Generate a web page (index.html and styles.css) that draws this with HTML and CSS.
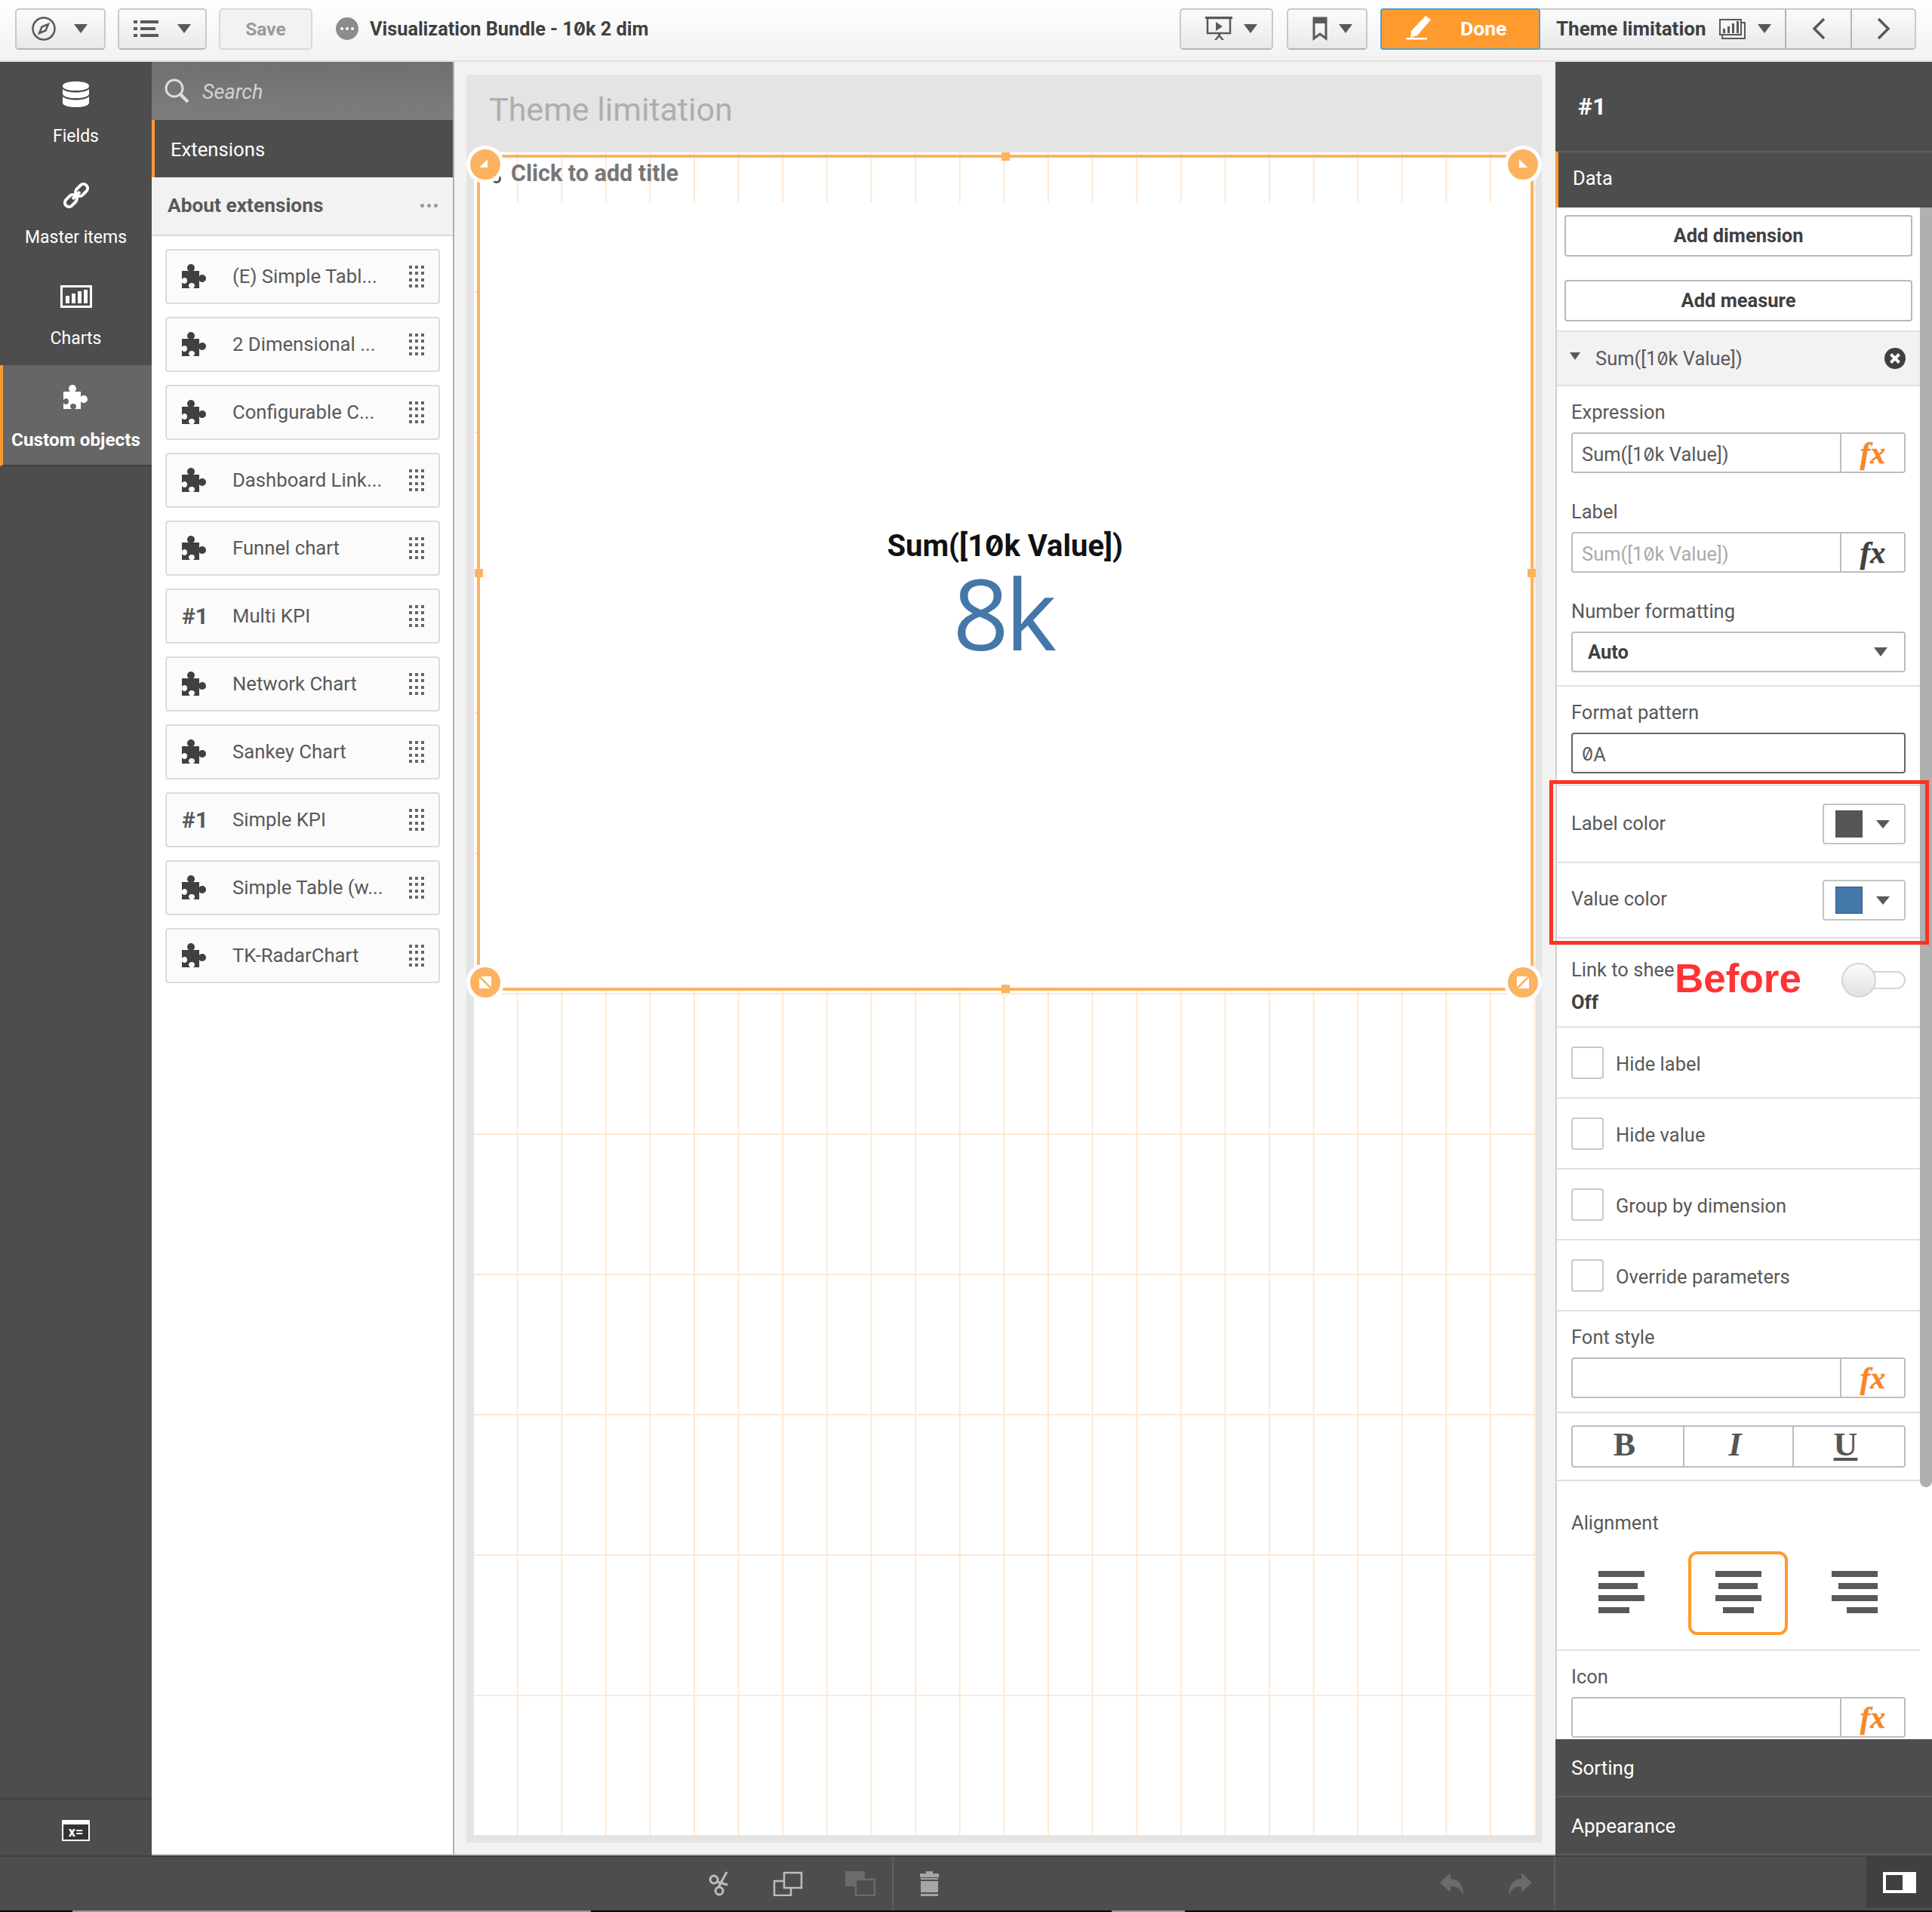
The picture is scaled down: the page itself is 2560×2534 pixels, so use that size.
FILE: index.html
```html
<!DOCTYPE html>
<html lang="en">
<head>
  <meta charset="UTF-8">
  <title>Theme limitation</title>
  <link rel="stylesheet" href="styles.css">
</head>
<body>
  <svg class="sprite" width="0" height="0">
    <symbol id="puzzle" viewBox="0 0 34 34"><path d="M0 9h9c-2-2-2-3-2-4a5 5 0 0 1 10 0c0 1 0 2-2 4h8v7c2-2 3-2 4-2a5 5 0 0 1 0 10c-1 0-2 0-4-2v10h-8c1-1 2-2 2-3a4 4 0 0 0-8 0c0 1 1 2 2 3H0V24c1 1 2 2 3 2a4 4 0 0 0 0-8c-1 0-2 1-3 2z"/></symbol>
    <symbol id="grip" viewBox="0 0 20 29"><path d="M0 0h4v4H0zM8 0h4v4H8zM16 0h4v4h-4zM0 8h4v4H0zM8 8h4v4H8zM16 8h4v4h-4zM0 17h4v4H0zM8 17h4v4H8zM16 17h4v4h-4zM0 25h4v4H0zM8 25h4v4H8zM16 25h4v4h-4z"/></symbol>
  </svg>

  <header class="toolbar">
    <button class="btn btn-nav">
      <svg class="ico" width="32" height="32" viewBox="0 0 32 32"><circle cx="16" cy="16" r="14.5" fill="none" stroke="#595959" stroke-width="2.5"/><path d="M22 10l-3.5 8.5L10 22l3.5-8.500z" fill="none" stroke="#595959" stroke-width="2.500"/></svg>
      <i class="caret"></i>
    </button>
    <button class="btn btn-list">
      <svg class="ico" width="33" height="22" viewBox="0 0 33 22"><path fill="#595959" d="M0 0h5v4H0zM9 0h24v4H9zM0 9h5v4H0zM9 9h20v4H9zM0 18h5v4H0zM9 18h24v4H9z"/></svg>
      <i class="caret"></i>
    </button>
    <button class="btn btn-save">Save</button>
    <span class="app-bubble"><i></i><i></i><i></i></span>
    <span class="app-title">Visualization Bundle - 1<span class="z">0</span>k 2 dim</span>

    <div class="toolbar-right">
      <button class="btn btn-present">
        <svg class="ico" width="36" height="32" viewBox="0 0 36 32"><path fill="none" stroke="#595959" stroke-width="2.500" d="M3 2h30v20H3z"/><path fill="#595959" d="M0 0h36v3H0zM14 7l9 6-9 6zM17 22h3v3l5 6h-3l-3.500-4-3.500 4h-3l5-6z"/></svg>
        <i class="caret"></i>
      </button>
      <button class="btn btn-bookmark">
        <svg class="ico" width="20" height="32" viewBox="0 0 20 32"><path fill="none" stroke="#595959" stroke-width="3" d="M2 2h16v27l-8-6-8 6z"/><path fill="#595959" d="M2 2h16v7H2z"/></svg>
        <i class="caret"></i>
      </button>
      <div class="sheet-nav">
        <button class="btn-done">
          <svg width="36" height="32" viewBox="0 0 36 32"><path fill="#fff" d="M26 0l7 5-18 21-9 3 1-9zM0 29h28v2.500H0z"/></svg>
          <span>Done</span>
        </button>
        <div class="sheet-name">
          <span>Theme limitation</span>
          <svg width="37" height="30" viewBox="0 0 37 30"><path fill="none" stroke="#595959" stroke-width="2" d="M1 3h28v20H1zM4 23v5h30V7h-5"/><path fill="#595959" d="M5 15h3v6H5zM11 12h3v9h-3zM17 8h3v13h-3zM23 5h3v16h-3z"/></svg>
          <i class="caret"></i>
        </div>
        <button class="sheet-step"><svg width="18" height="28" viewBox="0 0 18 28"><path fill="none" stroke="#595959" stroke-width="3.500" d="M16 1L3 14l13 13"/></svg></button>
        <button class="sheet-step"><svg width="18" height="28" viewBox="0 0 18 28"><path fill="none" stroke="#595959" stroke-width="3.500" d="M2 1l13 13L2 27"/></svg></button>
      </div>
    </div>
  </header>

  <div class="workspace">
    <nav class="nav">
      <a class="nav-item">
        <svg width="35" height="34" viewBox="0 0 35 34"><path fill="#fff" d="M17.500 0C27 0 35 2 35 6s-8 6-17.500 6S0 10 0 6s8-6 17.500-6zM0 10c3 3 10 4.500 17.500 4.500S32 13 35 10v6c0 4-8 6-17.500 6S0 20 0 16zM0 20c3 3 10 4.500 17.500 4.500S32 23 35 20v8c0 4-8 6-17.500 6S0 32 0 28z"/></svg>
        <span>Fields</span>
      </a>
      <a class="nav-item">
        <svg width="34" height="34" viewBox="0 0 34 34"><g fill="none" stroke="#fff" stroke-width="4" transform="rotate(-45 17 17)"><rect x="-2" y="11.500" width="18" height="11" rx="5.500"/><rect x="18" y="11.500" width="18" height="11" rx="5.500"/><path d="M10 17h14"/></g></svg>
        <span>Master items</span>
      </a>
      <a class="nav-item">
        <svg width="42" height="30" viewBox="0 0 42 30"><path fill="none" stroke="#fff" stroke-width="3" d="M1.500 1.500h39v27h-39z"/><path fill="#fff" d="M7 14h5v10H7zM15 11h5v13h-5zM23 8h5v16h-5zM31 6h5v18h-5z"/></svg>
        <span>Charts</span>
      </a>
      <a class="nav-item active">
        <svg width="34" height="34" class="ico-white"><use href="#puzzle"/></svg>
        <span>Custom objects</span>
      </a>
      <div class="nav-foot">
        <div class="var-icon">x=</div>
      </div>
    </nav>

    <aside class="assets">
      <div class="search">
        <svg width="33" height="33" viewBox="0 0 33 33"><circle cx="13" cy="13" r="11" fill="none" stroke="#ddd" stroke-width="3"/><path stroke="#ddd" stroke-width="4.500" d="M21 21l10 10"/></svg>
        <span>Search</span>
      </div>
      <div class="assets-tab">Extensions</div>
      <div class="assets-about">
        <b>About extensions</b>
        <span class="more"><i></i><i></i><i></i></span>
      </div>
      <ul class="cards">
        <li class="card"><svg class="card-ico"><use href="#puzzle"/></svg><span>(E) Simple Tabl...</span><svg class="grip"><use href="#grip"/></svg></li>
        <li class="card"><svg class="card-ico"><use href="#puzzle"/></svg><span>2 Dimensional ...</span><svg class="grip"><use href="#grip"/></svg></li>
        <li class="card"><svg class="card-ico"><use href="#puzzle"/></svg><span>Configurable C...</span><svg class="grip"><use href="#grip"/></svg></li>
        <li class="card"><svg class="card-ico"><use href="#puzzle"/></svg><span>Dashboard Link...</span><svg class="grip"><use href="#grip"/></svg></li>
        <li class="card"><svg class="card-ico"><use href="#puzzle"/></svg><span>Funnel chart</span><svg class="grip"><use href="#grip"/></svg></li>
        <li class="card"><b class="card-ico">#1</b><span>Multi KPI</span><svg class="grip"><use href="#grip"/></svg></li>
        <li class="card"><svg class="card-ico"><use href="#puzzle"/></svg><span>Network Chart</span><svg class="grip"><use href="#grip"/></svg></li>
        <li class="card"><svg class="card-ico"><use href="#puzzle"/></svg><span>Sankey Chart</span><svg class="grip"><use href="#grip"/></svg></li>
        <li class="card"><b class="card-ico">#1</b><span>Simple KPI</span><svg class="grip"><use href="#grip"/></svg></li>
        <li class="card"><svg class="card-ico"><use href="#puzzle"/></svg><span>Simple Table (w...</span><svg class="grip"><use href="#grip"/></svg></li>
        <li class="card"><svg class="card-ico"><use href="#puzzle"/></svg><span>TK-RadarChart</span><svg class="grip"><use href="#grip"/></svg></li>
      </ul>
    </aside>

    <main class="stage">
      <div class="sheet">
        <h1 class="sheet-title">Theme limitation</h1>
        <div class="grid">
          <div class="object">
            <div class="object-title">Click to add title</div>
            <div class="object-body">
              <div class="kpi-label">Sum([1<span class="z">0</span>k Value])</div>
              <div class="kpi-value">8k</div>
            </div>
            <i class="spin"></i>
            <span class="handle tl"><svg width="20" height="20" viewBox="0 0 20 20"><path fill="#fff" d="M13 3v11H2z"/></svg></span>
            <span class="handle tr"><svg width="20" height="20" viewBox="0 0 20 20"><path fill="#fff" d="M5 3v11h11z"/></svg></span>
            <span class="handle bl"><svg width="20" height="20" viewBox="0 0 20 20"><path fill="#fff" d="M2 2h16v16H2z"/><path stroke="#fcb35f" stroke-width="2.500" d="M1 1l18 18"/></svg></span>
            <span class="handle br"><svg width="20" height="20" viewBox="0 0 20 20"><path fill="#fff" d="M2 2h16v16H2z"/><path stroke="#fcb35f" stroke-width="2.500" d="M19 1L1 19"/></svg></span>
            <i class="nub top"></i><i class="nub bottom"></i><i class="nub left"></i><i class="nub right"></i>
          </div>
        </div>
      </div>
    </main>

    <aside class="props">
      <div class="props-head">#1</div>
      <div class="props-tab">Data</div>
      <div class="props-body">
        <div class="add-btn first">Add dimension</div>
        <div class="add-btn">Add measure</div>

        <div class="measure-head">
          <i class="caret small"></i>
          <span class="measure-name">Sum([1<span class="z">0</span>k Value])</span>
          <svg width="28" height="28" viewBox="0 0 28 28"><circle cx="14" cy="14" r="14" fill="#404040"/><path stroke="#fff" stroke-width="4" d="M8.500 8.500l11 11M19.500 8.500l-11 11"/></svg>
        </div>

        <div class="section expr-block">
          <label>Expression</label>
          <div class="input-fx"><span class="val">Sum([1<span class="z">0</span>k Value])</span><em class="fx">fx</em></div>
          <label class="next">Label</label>
          <div class="input-fx"><span class="val muted">Sum([1<span class="z">0</span>k Value])</span><em class="fx dark">fx</em></div>
          <label class="next">Number formatting</label>
          <div class="select"><b>Auto</b><i class="caret"></i></div>
        </div>

        <div class="section pattern-block">
          <label>Format pattern</label>
          <div class="input-plain"><span class="z">0</span>A</div>
        </div>

        <div class="section color-row">
          <span>Label color</span>
          <div class="color-btn"><i class="swatch grey"></i><i class="caret"></i></div>
        </div>
        <div class="section color-row value-row">
          <span>Value color</span>
          <div class="color-btn"><i class="swatch blue"></i><i class="caret"></i></div>
        </div>

        <div class="section link-row">
          <div class="link-text">
            <span>Link to sheet</span>
            <b>Off</b>
          </div>
          <div class="toggle"><i></i></div>
        </div>

        <div class="section check-row"><i class="check"></i><span>Hide label</span></div>
        <div class="section check-row"><i class="check"></i><span>Hide value</span></div>
        <div class="section check-row"><i class="check"></i><span>Group by dimension</span></div>
        <div class="section check-row"><i class="check"></i><span>Override parameters</span></div>

        <div class="section font-block">
          <label>Font style</label>
          <div class="input-fx empty"><span class="val"></span><em class="fx">fx</em></div>
        </div>

        <div class="section biu-block">
          <div class="biu"><b>B</b><i>I</i><u>U</u></div>
        </div>

        <div class="section align-block">
          <label>Alignment</label>
          <div class="align-row">
            <div class="align-opt left"><i></i><i></i><i></i><i></i></div>
            <div class="align-opt center on"><i></i><i></i><i></i><i></i></div>
            <div class="align-opt right"><i></i><i></i><i></i><i></i></div>
          </div>
        </div>

        <div class="icon-block">
          <label>Icon</label>
          <div class="input-fx empty"><span class="val"></span><em class="fx">fx</em></div>
        </div>

        <i class="scrollbar"></i>
      </div>
      <div class="props-acc">Sorting</div>
      <div class="props-acc">Appearance</div>

      <div class="red-box"></div>
      <div class="before">Before</div>
    </aside>
  </div>

  <footer class="bottombar">
    <div class="bottom-edit">
      <svg class="scissors" width="33" height="33" viewBox="0 0 33 33"><g fill="none" stroke="#bdbdbd" stroke-width="3"><circle cx="8" cy="11" r="5"/><circle cx="15" cy="26" r="5"/><path d="M12 14l14 4M14 21L25 1"/></g></svg>
      <svg width="40" height="33" viewBox="0 0 40 33"><path fill="#4d4d4d" stroke="#bdbdbd" stroke-width="2.500" d="M2 13h22v19H2z"/><path fill="#4d4d4d" stroke="#bdbdbd" stroke-width="2.500" d="M15 2h23v20H15z"/></svg>
      <svg width="40" height="33" viewBox="0 0 40 33"><path fill="#6b6b6b" d="M0 0h26v20H0z"/><path fill="#4d4d4d" stroke="#6b6b6b" stroke-width="2.500" d="M14 11h25v21H14z"/></svg>
    </div>
    <div class="bottom-history">
      <svg class="trash" width="25" height="33" viewBox="0 0 25 33"><path fill="#a6a6a6" d="M8 0h9v3h8v5H0V3h8zM1 9h23v24H1z"/><path stroke="#4d4d4d" stroke-width="2" d="M1 12h23M1 29h23"/></svg>
      <svg class="undo" width="31" height="30" viewBox="0 0 31 30"><path fill="#6b6b6b" d="M14 0v8c10 0 17 8 17 22-3-8-8-12-17-12v8L0 13z"/></svg>
      <svg width="31" height="30" viewBox="0 0 31 30"><path fill="#6b6b6b" d="M17 0v8C7 8 0 16 0 30c3-8 8-12 17-12v8l14-13z"/></svg>
    </div>
    <div class="bottom-view">
      <div class="panel-toggle"><i class="pane-icon"></i></div>
    </div>
  </footer>
  <div class="page-strip"></div>
</body>
</html>
```

FILE: styles.css
```css
* {
  box-sizing: border-box;
}

body {
  margin: 0;
  width: 2560px;
  height: 2534px;
  overflow: hidden;
  display: flex;
  flex-direction: column;
  font-family: Roboto, "Open Sans", sans-serif;
  font-size: 25.5px;
  color: #595959;
  background: #fff;
}

button {
  font-family: inherit;
  padding: 0;
}

.sprite {
  position: absolute;
}

.z {
  font-family: Inter, sans-serif;
  font-feature-settings: "zero";
  font-size: 0.94em;
}

.caret {
  display: inline-block;
  width: 0;
  height: 0;
  border-left: 9px solid transparent;
  border-right: 9px solid transparent;
  border-top: 12px solid #595959;
}

.caret.small {
  border-left-width: 7px;
  border-right-width: 7px;
  border-top-width: 10px;
}

/* top toolbar */
.toolbar {
  height: 82px;
  flex: none;
  display: flex;
  align-items: center;
  padding: 0 21px 4px 20px;
  background: linear-gradient(#fff, #f2f2f2);
  border-bottom: 2px solid #e2e2e2;
}

.btn {
  height: 55px;
  display: flex;
  align-items: center;
  border: 2px solid #c9c9c9;
  border-bottom-color: #b5b5b5;
  border-radius: 5px;
  background: linear-gradient(#fbfbfb, #e9e9e9);
}

.btn-nav {
  width: 120px;
  margin-right: 16px;
  padding-left: 20px;
  gap: 24px;
}

.btn-list {
  width: 118px;
  margin-right: 16px;
  padding-left: 19px;
  gap: 25px;
}

.btn-save {
  width: 124px;
  justify-content: center;
  font-size: 24.500px;
  font-weight: 700;
  color: #9a9a9a;
  background: #f2f2f2;
  border-color: #d8d8d8;
}

.app-bubble {
  width: 30px;
  height: 30px;
  margin-left: 31px;
  border-radius: 50%;
  background: #8c8c8c;
  display: flex;
  align-items: center;
  justify-content: center;
  gap: 3px;
}

.app-bubble i {
  width: 4px;
  height: 4px;
  background: #fff;
  border-radius: 50%;
}

.app-title {
  margin-left: 15px;
  font-size: 25.300px;
  font-weight: 700;
  color: #404040;
}

.toolbar-right {
  margin-left: auto;
  display: flex;
  align-items: center;
}

.btn-present {
  width: 124px;
  padding-left: 32px;
  gap: 15px;
  margin-right: 18px;
}

.btn-bookmark {
  width: 107px;
  padding-left: 32px;
  gap: 15px;
  margin-right: 17px;
}

.sheet-nav {
  display: flex;
  height: 55px;
  border: 2px solid #c9c9c9;
  border-left: 0;
  border-bottom-color: #b5b5b5;
  border-radius: 5px;
  background: linear-gradient(#fbfbfb, #e9e9e9);
}

.btn-done {
  width: 212px;
  margin-top: -2px;
  height: 55px;
  display: flex;
  align-items: center;
  padding: 0 0 2px 32px;
  gap: 36px;
  border: 2px solid #4fa3d1;
  border-radius: 4px;
  background: #ff9a2e;
  color: #fff;
  font-size: 26.500px;
  font-weight: 700;
}

.sheet-name {
  width: 326px;
  display: flex;
  align-items: center;
  padding-left: 21px;
  font-size: 26px;
  font-weight: 700;
  color: #404040;
  border-right: 2px solid #b5b5b5;
}

.sheet-name svg {
  margin-left: 17px;
  margin-right: 14px;
}

.sheet-step {
  width: 85px;
  border: 0;
  background: none;
  display: flex;
  align-items: center;
  justify-content: center;
}

.sheet-step + .sheet-step {
  border-left: 2px solid #b5b5b5;
}

/* main row */
.workspace {
  height: 2377px;
  flex: none;
  display: flex;
  position: relative;
}

.nav {
  width: 201px;
  flex: none;
  background: #4d4d4d;
  display: flex;
  flex-direction: column;
  color: #fff;
}

.nav-item {
  height: 134px;
  padding-top: 26px;
  display: flex;
  flex-direction: column;
  align-items: center;
  font-size: 23px;
}

.nav-item svg {
  height: 34px;
}

.nav-item span {
  margin-top: 24px;
  line-height: 30px;
}

.nav-item.active {
  background: #666;
  border-left: 4px solid #ff9a2e;
  border-bottom: 2px solid #404040;
  font-weight: 700;
  font-size: 24.300px;
  padding-right: 4px;
}

.ico-white {
  fill: #fff;
}

.nav-foot {
  margin-top: auto;
  height: 76px;
  border-top: 2px solid #404040;
  display: flex;
  align-items: center;
  justify-content: center;
  padding-top: 8px;
}

.var-icon {
  width: 37px;
  height: 28px;
  border: 2px solid #fff;
  border-top-width: 6px;
  background: #333;
  color: #fff;
  font-size: 18px;
  line-height: 19px;
  font-weight: 700;
  text-align: center;
}

/* assets panel */
.assets {
  width: 401px;
  flex: none;
  background: #fff;
  border-right: 2px solid #b0b0b0;
  border-bottom: 2px solid #c8c8c8;
}

.search {
  height: 77px;
  display: flex;
  align-items: center;
  padding-left: 17px;
  gap: 17px;
  background: linear-gradient(#707070, #7d7d7d);
  color: #d2d2d2;
  font-size: 27px;
  font-style: italic;
}

.search span {
  margin-top: 2px;
}

.assets-tab {
  height: 76px;
  display: flex;
  align-items: center;
  padding: 1px 0 0 21px;
  background: #4d4d4d;
  border-left: 4px solid #ff9a2e;
  color: #fff;
  font-size: 25.700px;
}

.assets-about {
  height: 78px;
  display: flex;
  align-items: center;
  justify-content: space-between;
  padding: 0 20px 2px 21px;
  background: #f2f2f2;
  border-bottom: 2px solid #d9d9d9;
  font-size: 26.300px;
}

.more {
  display: flex;
  gap: 4px;
}

.more i {
  width: 5px;
  height: 5px;
  border-radius: 50%;
  background: #999;
}

.cards {
  list-style: none;
  margin: 0;
  padding: 17px 17px 0 18px;
  display: flex;
  flex-direction: column;
  gap: 17px;
}

.card {
  height: 73px;
  display: flex;
  align-items: center;
  padding: 0 19px 0 20px;
  background: #fbfbfb;
  border: 2px solid #dcdcdc;
  border-radius: 4px;
  font-size: 25.700px;
}

.card-ico {
  width: 34px;
  height: 34px;
  fill: #404040;
  flex: none;
  font-size: 30px;
  line-height: 34px;
  color: #595959;
}

.card span {
  margin: -2px 0 0 33px;
  flex: 1;
}

.grip {
  width: 20px;
  height: 29px;
  fill: #666;
}

/* sheet area */
.stage {
  width: 1459px;
  flex: none;
  background: #f2f2f2;
  padding: 17px 18px 15px 16px;
  border-bottom: 2px solid #c8c8c8;
}

.sheet {
  height: 100%;
  background: #e4e4e4;
  padding-right: 8px;
  padding-bottom: 10px;
  display: flex;
  flex-direction: column;
}

.sheet-title {
  margin: 0 0 0 30px;
  height: 102px;
  line-height: 92px;
  font-size: 43px;
  font-weight: 400;
  color: #aeaeae;
}

.grid {
  flex: 1;
  margin-left: 10px;
  position: relative;
  background-color: #fff;
  background-image:
    linear-gradient(to right, transparent calc(100% - 2px), #ffe8d4 0),
    linear-gradient(to bottom, transparent calc(100% - 2px), #ffe8d4 0);
  background-size: 58.62px 186px;
  background-position: 0 1px;
}

.object {
  position: absolute;
  left: 4px;
  top: 4px;
  width: 1399.5px;
  height: 1108px;
  border: 4px solid #fcb35f;
  display: flex;
  flex-direction: column;
}

.object-title {
  height: 59px;
  padding: 1px 0 0 41px;
  line-height: 40px;
  font-size: 30.500px;
  font-weight: 700;
  color: #777;
}

.object-body {
  flex: 1;
  background: #fff;
  display: flex;
  flex-direction: column;
  align-items: center;
  justify-content: center;
  padding-bottom: 1px;
}

.kpi-label {
  font-size: 40px;
  line-height: 46px;
  margin-bottom: 1px;
  font-weight: 700;
  color: #111;
}

.kpi-value {
  font-family: "Open Sans", sans-serif;
  font-size: 130px;
  line-height: 128px;
  letter-spacing: -5px;
  margin-left: -6px;
  color: #4477aa;
}

.handle {
  position: absolute;
  width: 50px;
  height: 50px;
  border-radius: 50%;
  background: #fcb35f;
  border: 5px solid #fff;
  display: flex;
  align-items: center;
  justify-content: center;
}

.handle.tl { left: -18px; top: -16px; }
.handle.tr { right: -15px; top: -16px; }
.handle.bl { left: -18px; bottom: -18px; }
.handle.br { right: -15px; bottom: -18px; }

.spin {
  position: absolute;
  left: 16px;
  top: 22px;
  width: 12px;
  height: 12px;
  border-right: 3px solid #555;
  border-bottom: 3px solid #555;
  border-radius: 50%;
}

.nub {
  position: absolute;
  width: 11px;
  height: 11px;
  background: #fcb35f;
}

.nub.top { left: 50%; top: -7px; margin-left: -5px; }
.nub.bottom { left: 50%; bottom: -7px; margin-left: -5px; }
.nub.left { left: -7px; top: 50%; margin-top: -5px; }
.nub.right { right: -7px; top: 50%; margin-top: -5px; }

/* properties panel */
.props {
  width: 499px;
  flex: none;
  display: flex;
  flex-direction: column;
  position: relative;
}

.props-head {
  height: 118px;
  flex: none;
  background: #4d4d4d;
  color: #fff;
  font-size: 32px;
  font-weight: 700;
  padding: 40px 0 0 30px;
  line-height: 38px;
}

.props-tab {
  height: 75px;
  flex: none;
  display: flex;
  align-items: center;
  padding: 0 0 5px 19px;
  background: #4d4d4d;
  border-top: 2px solid #5e5e5e;
  border-left: 4px solid #ff9a2e;
  color: #fff;
  font-size: 25.500px;
}

.props-body {
  flex: 1;
  position: relative;
  padding-right: 16px;
  border-left: 2px solid #d0d0d0;
  overflow: hidden;
}

.add-btn {
  width: 461px;
  height: 55px;
  margin: 31px 0 0 10px;
  padding-bottom: 2px;
  display: flex;
  align-items: center;
  justify-content: center;
  border: 2px solid #b8b8b8;
  border-radius: 4px;
  font-weight: 700;
  color: #404040;
}

.add-btn.first {
  margin-top: 10px;
}

.measure-head {
  height: 74px;
  margin-top: 12px;
  padding: 0 19px 0 17px;
  display: flex;
  align-items: center;
  background: #f2f2f2;
  border-top: 2px solid #e0e0e0;
  border-bottom: 2px solid #e0e0e0;
}

.measure-head .caret {
  margin-top: -6px;
}

.measure-name {
  margin-left: 20px;
  flex: 1;
}

.section {
  border-bottom: 2px solid #e0e0e0;
  padding-left: 19px;
  padding-right: 19px;
}

label {
  display: block;
  height: 27px;
  line-height: 27px;
}

label.next {
  margin-top: 38px;
}

.input-fx,
.input-plain,
.select {
  height: 54px;
  margin-top: 13px;
  display: flex;
  align-items: center;
  border: 2px solid #bdbdbd;
  border-radius: 4px;
}

.val {
  flex: 1;
  padding: 3px 0 0 12px;
}

.val.muted {
  color: #aaa;
}

.fx {
  width: 85px;
  height: 100%;
  display: flex;
  align-items: center;
  justify-content: center;
  border-left: 2px solid #bdbdbd;
  font-family: "Liberation Serif", serif;
  font-size: 40px;
  font-weight: 700;
  font-style: italic;
  color: #f5882a;
  -webkit-text-stroke: 0.6px currentColor;
}

.fx.dark {
  color: #404040;
}

.expr-block {
  padding-top: 21px;
  height: 398px;
}

.select {
  justify-content: space-between;
  padding: 0 22px 0 20px;
}

.select b {
  color: #404040;
}

.pattern-block {
  padding-top: 21px;
  height: 132px;
}

.input-plain {
  padding: 3px 0 0 12px;
  border-color: #666;
}

.color-row {
  height: 102px;
  display: flex;
  align-items: center;
  justify-content: space-between;
}

.color-row span {
  margin-top: -3px;
}

.value-row {
  height: 100px;
}

.value-row span {
  margin-top: -5px;
}

.color-btn {
  width: 110px;
  height: 54px;
  display: flex;
  align-items: center;
  padding-left: 15px;
  gap: 18px;
  border: 2px solid #c4c4c4;
  border-radius: 4px;
}

.swatch {
  width: 36px;
  height: 36px;
}

.swatch.grey {
  background: #555;
}

.swatch.blue {
  background: #4477aa;
  border: 1px solid #33557a;
}

.color-btn .caret {
  border-left-width: 9px;
  border-right-width: 9px;
  border-top-width: 11px;
}

.link-row {
  height: 118px;
  display: flex;
  align-items: center;
  justify-content: space-between;
}

.link-text {
  display: flex;
  flex-direction: column;
  gap: 16px;
  line-height: 27px;
  padding-top: 10px;
}

.link-text b {
  color: #404040;
}

.toggle {
  width: 85px;
  height: 24px;
  position: relative;
  border: 2px solid #d4d4d4;
  border-radius: 12px;
  margin-top: -6px;
  margin-left: -2px;
}

.toggle i {
  position: absolute;
  left: -2px;
  top: -13px;
  width: 46px;
  height: 46px;
  border-radius: 50%;
  background: linear-gradient(#fafafa, #e2e2e2);
  border: 2px solid #d4d4d4;
}

.check-row {
  height: 94px;
  display: flex;
  align-items: center;
  gap: 16px;
}

.check-row span {
  margin-top: 3px;
}

.check {
  width: 43px;
  height: 43px;
  border: 2px solid #c8c8c8;
  border-radius: 4px;
}

.font-block {
  padding-top: 21px;
  height: 135px;
}

.biu-block {
  height: 90px;
  padding-top: 16px;
}

.biu {
  height: 56px;
  display: grid;
  grid-template-columns: 146px 147px 1fr;
  border: 2px solid #bdbdbd;
  border-radius: 4px;
  font-family: "Liberation Serif", serif;
  font-size: 44px;
  line-height: 47px;
  font-weight: 700;
  text-align: center;
  color: #555;
}

.biu b,
.biu i,
.biu u {
  padding-right: 9px;
}

.biu i {
  border-left: 2px solid #bdbdbd;
  border-right: 2px solid #bdbdbd;
}

.align-block {
  height: 225px;
  padding-top: 42px;
}

.align-row {
  margin-top: 24px;
  display: grid;
  grid-template-columns: 155px 132px 1fr;
  column-gap: 0;
}

.align-opt {
  height: 111px;
  display: flex;
  flex-direction: column;
  justify-content: center;
  gap: 8px;
  padding-bottom: 3px;
}

.align-opt i {
  height: 8px;
  width: 61px;
  background: #595959;
}

.align-opt i:nth-child(even) {
  width: 52px;
}

.align-opt i:nth-child(4) {
  width: 41px;
}

.align-opt.left {
  padding-left: 36px;
}

.align-opt.center {
  align-items: center;
  border: 4px solid #ff9a2e;
  border-radius: 12px;
}

.align-opt.right {
  align-items: flex-end;
  padding-right: 37px;
}

.icon-block {
  padding: 21px 19px 0;
}

.scrollbar {
  position: absolute;
  right: 0;
  top: 0;
  width: 16px;
  height: 1696px;
  background: #b0b0b0;
  border-radius: 0 0 8px 8px;
}

.props-acc {
  height: 77px;
  flex: none;
  display: flex;
  align-items: center;
  padding-left: 21px;
  background: #4d4d4d;
  border-bottom: 2px solid #5e5e5e;
  color: #fff;
  font-size: 26px;
}

.props-acc:last-of-type {
  border-bottom: 0;
  height: 76px;
}

.red-box {
  position: absolute;
  left: -8px;
  top: 952px;
  width: 503px;
  height: 218px;
  border: 5px solid #ff3322;
}

.before {
  position: absolute;
  left: 158px;
  top: 1185px;
  font-family: "Liberation Sans", sans-serif;
  font-size: 53px;
  line-height: 60px;
  font-weight: 700;
  color: #ff3333;
  background: #fff;
}

/* bottom bar */
.bottombar {
  height: 73px;
  flex: none;
  display: flex;
  background: #4d4d4d;
  border-top: 2px solid #404040;
}

.bottombar svg {
  flex: none;
}

.bottom-edit {
  width: 1184px;
  display: flex;
  align-items: center;
  justify-content: flex-end;
  gap: 56px;
  padding-right: 22px;
  border-right: 2px solid #5e5e5e;
}

.scissors {
  margin-right: -3px;
}

.bottom-history {
  width: 877px;
  display: flex;
  align-items: center;
  gap: 60px;
  padding: 0 29px 0 35px;
  border-right: 2px solid #5e5e5e;
}

.undo {
  margin-left: auto;
}

.bottom-view {
  flex: 1;
  display: flex;
  justify-content: flex-end;
}

.panel-toggle {
  width: 87px;
  display: flex;
  align-items: center;
  justify-content: center;
  background: #404040;
  margin-bottom: 4px;
}

.pane-icon {
  width: 44px;
  height: 28px;
  background: #fff;
  border: 4px solid #fff;
  border-right-width: 18px;
  box-shadow: inset 0 0 0 14px #404040;
}

.page-strip {
  height: 2px;
  flex: none;
  background: linear-gradient(to right, #000 96px, #999 96px, #999 783px, #000 783px, #000 1473px, #999 1473px, #999 1570px, #000 1570px);
}
```
